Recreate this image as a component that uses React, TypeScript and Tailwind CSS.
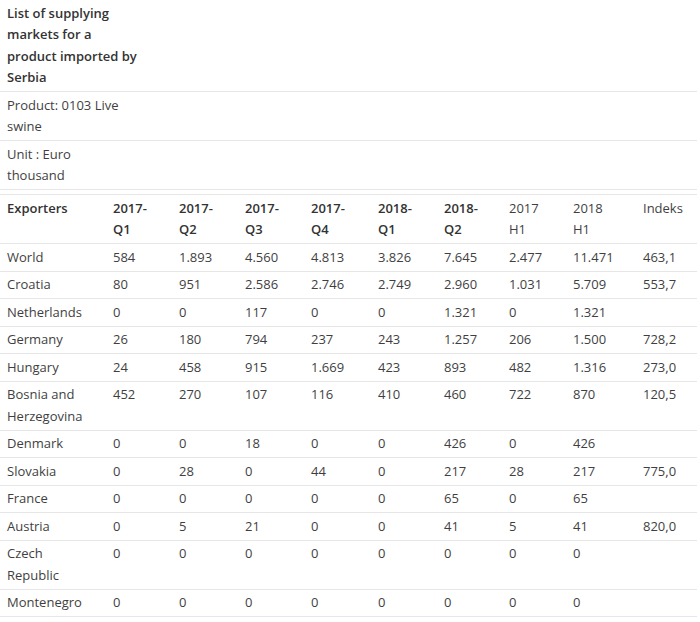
import React from 'react';

type Row = { name: React.ReactNode; values: string[] };

const rows: Row[] = [
  { name: 'World', values: ['584', '1.893', '4.560', '4.813', '3.826', '7.645', '2.477', '11.471', '463,1'] },
  { name: 'Croatia', values: ['80', '951', '2.586', '2.746', '2.749', '2.960', '1.031', '5.709', '553,7'] },
  { name: 'Netherlands', values: ['0', '0', '117', '0', '0', '1.321', '0', '1.321', ''] },
  { name: 'Germany', values: ['26', '180', '794', '237', '243', '1.257', '206', '1.500', '728,2'] },
  { name: 'Hungary', values: ['24', '458', '915', '1.669', '423', '893', '482', '1.316', '273,0'] },
  { name: <>Bosnia and<br />Herzegovina</>, values: ['452', '270', '107', '116', '410', '460', '722', '870', '120,5'] },
  { name: 'Denmark', values: ['0', '0', '18', '0', '0', '426', '0', '426', ''] },
  { name: 'Slovakia', values: ['0', '28', '0', '44', '0', '217', '28', '217', '775,0'] },
  { name: 'France', values: ['0', '0', '0', '0', '0', '65', '0', '65', ''] },
  { name: 'Austria', values: ['0', '5', '21', '0', '0', '41', '5', '41', '820,0'] },
  { name: <>Czech<br />Republic</>, values: ['0', '0', '0', '0', '0', '0', '0', '0', ''] },
  { name: 'Montenegro', values: ['0', '0', '0', '0', '0', '0', '0', '0', ''] },
];

const headers: { label: React.ReactNode; bold: boolean }[] = [
  { label: <>2017-<br />Q1</>, bold: true },
  { label: <>2017-<br />Q2</>, bold: true },
  { label: <>2017-<br />Q3</>, bold: true },
  { label: <>2017-<br />Q4</>, bold: true },
  { label: <>2018-<br />Q1</>, bold: true },
  { label: <>2018-<br />Q2</>, bold: true },
  { label: <>2017<br />H1</>, bold: false },
  { label: <>2018<br />H1</>, bold: false },
  { label: 'Indeks', bold: false },
];

const widths = [106, 66, 66, 66, 67, 66, 65, 64, 70, 61];

const cell = 'px-[7px] py-[2.5px] align-top text-left';

export default function App() {
  return (
    <div className="bg-white w-[700px] h-[622px] overflow-hidden text-[13px] leading-[21.5px] text-[#3f3f3f]" style={{ fontFamily: '"Open Sans", "DejaVu Sans", sans-serif' }}>
      <table className="w-[697px] table-fixed border-collapse">
        <colgroup>
          {widths.map((w, i) => (
            <col key={i} style={{ width: w }} />
          ))}
        </colgroup>
        <tbody>
          <tr className="border-b border-[#e6e6e6]">
            <td colSpan={10} className={`${cell} font-semibold text-[#333]`}>
              List of supplying<br />markets for a<br />product imported by<br />Serbia
            </td>
          </tr>
          <tr className="border-b border-[#e6e6e6]">
            <td colSpan={10} className={cell}>
              Product: 0103 Live<br />swine
            </td>
          </tr>
          <tr className="border-b border-[#e6e6e6]">
            <td colSpan={10} className={cell}>
              Unit : Euro<br />thousand
            </td>
          </tr>
          <tr className="border-b border-[#e6e6e6]">
            <td colSpan={10} className="h-[5px] p-0"></td>
          </tr>
          <tr className="border-b border-[#e6e6e6]">
            <th className={`${cell} font-semibold text-[#333]`}>Exporters</th>
            {headers.map((h, i) => (
              <th key={i} className={`${cell} ${h.bold ? 'font-semibold text-[#333]' : 'font-normal'}`}>
                {h.label}
              </th>
            ))}
          </tr>
          {rows.map((r, i) => (
            <tr key={i} className="border-b border-[#e6e6e6]">
              <td className={cell}>{r.name}</td>
              {r.values.map((v, j) => (
                <td key={j} className={cell}>{v}</td>
              ))}
            </tr>
          ))}
        </tbody>
      </table>
    </div>
  );
}
